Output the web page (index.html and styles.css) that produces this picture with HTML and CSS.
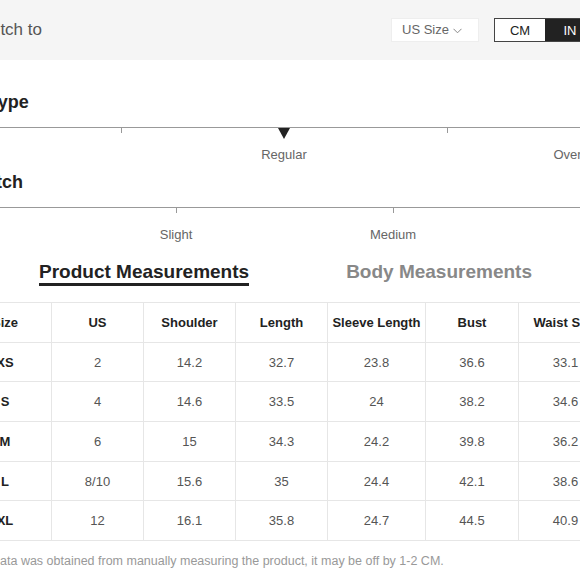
FILE: index.html
```html
<!DOCTYPE html>
<html lang="en">
<head>
<meta charset="utf-8">
<title>Size Guide</title>
<link rel="stylesheet" href="styles.css">
</head>
<body>
<div class="page">
  <div class="topbar">
    <span class="switch-label">Switch to</span>
    <div class="controls">
      <div class="size-select">US Size
        <svg class="chevron" width="9" height="6" viewBox="0 0 9 6"><polyline points="0.5,0.8 4.5,4.8 8.5,0.8" fill="none" stroke="#888" stroke-width="1"/></svg>
      </div>
      <div class="unit-toggle">
        <span class="unit">CM</span>
        <span class="unit unit-active">IN</span>
      </div>
    </div>
  </div>

  <section class="attr">
    <h3 class="attr-title">Fit Type</h3>
    <div class="scale scale-fit">
      <div class="cell"></div>
      <div class="cell"><span class="tick"></span></div>
      <div class="cell"><span class="marker"></span><span class="scale-label">Regular</span></div>
      <div class="cell"><span class="tick"></span></div>
      <div class="cell cell-start"><span class="scale-label">Oversized</span></div>
    </div>
  </section>

  <section class="attr">
    <h3 class="attr-title attr-title-second">Stretch</h3>
    <div class="scale scale-stretch">
      <div class="cell"></div>
      <div class="cell"><span class="tick"></span><span class="scale-label">Slight</span></div>
      <div class="cell"><span class="tick"></span><span class="scale-label">Medium</span></div>
      <div class="cell"><span class="tick"></span><span class="scale-label">High</span></div>
    </div>
  </section>

  <div class="tabs">
    <span class="tab tab-active">Product Measurements</span>
    <span class="tab">Body Measurements</span>
  </div>

  <table class="sizes">
    <colgroup>
      <col class="c93"><col class="c92"><col class="c92"><col class="c92"><col class="c98"><col class="c93"><col class="c94">
    </colgroup>
    <thead>
      <tr><th>Size</th><th>US</th><th>Shoulder</th><th>Length</th><th>Sleeve Length</th><th>Bust</th><th>Waist Size</th></tr>
    </thead>
    <tbody>
      <tr><th>XS</th><td>2</td><td>14.2</td><td>32.7</td><td>23.8</td><td>36.6</td><td>33.1</td></tr>
      <tr><th>S</th><td>4</td><td>14.6</td><td>33.5</td><td>24</td><td>38.2</td><td>34.6</td></tr>
      <tr><th>M</th><td>6</td><td>15</td><td>34.3</td><td>24.2</td><td>39.8</td><td>36.2</td></tr>
      <tr><th>L</th><td>8/10</td><td>15.6</td><td>35</td><td>24.4</td><td>42.1</td><td>38.6</td></tr>
      <tr><th>XL</th><td>12</td><td>16.1</td><td>35.8</td><td>24.7</td><td>44.5</td><td>40.9</td></tr>
    </tbody>
  </table>

  <p class="note">Data was obtained from manually measuring the product, it may be off by 1-2 CM.</p>
</div>
</body>
</html>
```
FILE: styles.css
```css
html, body {
  margin: 0;
  padding: 0;
  background: #fff;
}
body {
  width: 580px;
  height: 580px;
  overflow: hidden;
  font-family: "Liberation Sans", Arial, sans-serif;
  color: #222;
}
.page {
  width: 720px;
  margin-left: -60px;
}

/* top bar */
.topbar {
  height: 60px;
  background: #f5f5f5;
  display: flex;
  align-items: center;
  padding: 0 64px 0 33px;
  box-sizing: border-box;
}
.switch-label {
  font-size: 17px;
  color: #555;
}
.controls {
  margin-left: auto;
  display: flex;
  align-items: center;
  gap: 15px;
}
.size-select {
  width: 88px;
  height: 24px;
  box-sizing: border-box;
  background: #fff;
  border: 1px solid #eee;
  display: flex;
  align-items: center;
  gap: 4px;
  padding-left: 10px;
  font-size: 13px;
  color: #666;
  margin-top: -1px;
}
.chevron {
  margin-top: 2px;
}
.unit-toggle {
  display: flex;
  border: 1px solid #444;
  height: 24px;
  box-sizing: border-box;
}
.unit {
  width: 50px;
  display: flex;
  align-items: center;
  justify-content: center;
  font-size: 13px;
  color: #222;
  background: #fff;
}
.unit-active {
  background: #222;
  color: #fff;
}

/* attribute scales */
.attr-title {
  margin: 31px 0 14px 21px;
  font-size: 18px;
  line-height: 22px;
  font-weight: bold;
  color: #222;
}
.attr-title-second {
  margin-top: 8px;
}
.scale {
  display: grid;
  border-top: 1px solid #999;
  height: 35px;
}
.scale-fit {
  grid-template-columns: 99.5px repeat(4, 163px);
}
.scale-stretch {
  grid-template-columns: 127.5px repeat(3, 217px);
}
.cell {
  display: flex;
  flex-direction: column;
  align-items: center;
  min-width: 0;
}
.cell-start {
  align-items: flex-start;
  padding-left: 25px;
}
.tick {
  display: block;
  width: 1px;
  height: 5px;
  background: #999;
  margin-bottom: 6px;
}
.marker {
  display: block;
  width: 0;
  height: 0;
  border-left: 6px solid transparent;
  border-right: 6px solid transparent;
  border-top: 11px solid #222;
}
.cell-start .scale-label,
.cell:first-child .scale-label {
  margin-top: 19px;
}
.scale-label {
  display: block;
  margin-top: 8px;
  font-size: 13px;
  line-height: 16px;
  color: #666;
  white-space: nowrap;
}

/* tabs */
.tabs {
  display: flex;
  gap: 97px;
  padding-left: 99px;
  margin-top: 18px;
}
.tab {
  font-size: 19px;
  line-height: 22px;
  font-weight: bold;
  color: #888;
  white-space: nowrap;
}
.tab-active {
  color: #222;
  border-bottom: 3px solid #222;
}

/* table */
.sizes {
  margin: 16px 0 0 18px;
  border-collapse: collapse;
  table-layout: fixed;
  width: 654px;
  font-size: 13px;
}
.c92 { width: 92px; }
.c93 { width: 93px; }
.c94 { width: 94px; }
.c98 { width: 98px; }
.sizes tr {
  height: 39.7px;
}
.sizes th,
.sizes td {
  border: 1px solid #e6e6e6;
  padding: 0;
  text-align: center;
  vertical-align: middle;
  white-space: nowrap;
}
.sizes th {
  font-weight: bold;
  color: #222;
}
.sizes td {
  color: #555;
}

.note {
  margin: 12px 0 0 51px;
  font-size: 12.5px;
  line-height: 16px;
  color: #999;
}
```
